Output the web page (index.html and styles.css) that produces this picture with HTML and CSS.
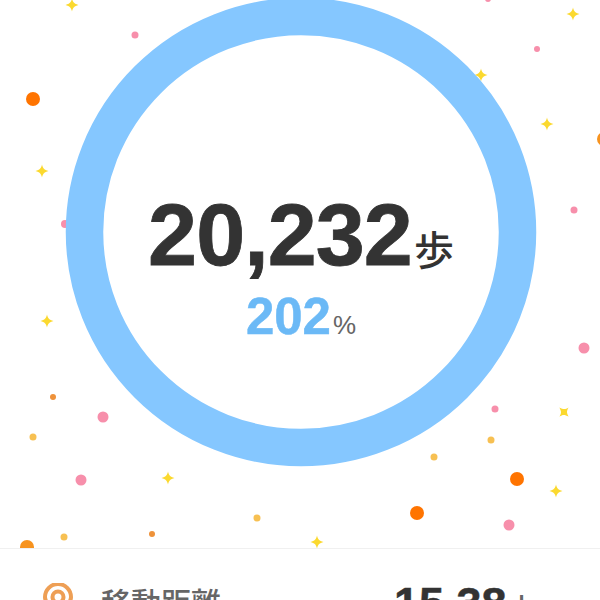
FILE: index.html
```html
<!DOCTYPE html>
<html lang="ja">
<head>
    <meta charset="UTF-8">
    <meta name="viewport" content="width=device-width, initial-scale=1.0">
    <title>歩数</title>
    <link rel="stylesheet" href="styles.css">
</head>
<body>
    <section class="hero">
        <!-- background confetti -->
        <svg class="confetti" width="600" height="548" viewBox="0 0 600 548">
            <defs>
                <path id="star" d="M0-6.5C1-2.4 2.2-1.4 6.5 0 2.2 1.4 1 2.4 0 6.5-1 2.4-2.2 1.4-6.5 0-2.2-1.4-1-2.4 0-6.5Z"/>
            </defs>
            <g class="stars">
                <use href="#star" x="72" y="5"/>
                <use href="#star" x="42" y="171"/>
                <use href="#star" x="47" y="321"/>
                <use href="#star" x="168" y="478"/>
                <use href="#star" x="317" y="542"/>
                <use href="#star" x="481" y="75"/>
                <use href="#star" x="573" y="14"/>
                <use href="#star" x="547" y="124"/>
                <use href="#star" x="556" y="491"/>
                <use href="#star" transform="translate(564 412) rotate(45)"/>
            </g>
            <g class="dots-orange">
                <circle cx="33" cy="99" r="7"/>
                <circle cx="517" cy="479" r="7"/>
                <circle cx="417" cy="513" r="7"/>
            </g>
            <g class="dots-amber">
                <circle cx="27" cy="547" r="7"/>
                <circle cx="604" cy="139" r="7"/>
            </g>
            <g class="dots-pink">
                <circle cx="135" cy="35" r="3.5"/>
                <circle cx="537" cy="49" r="3"/>
                <circle cx="574" cy="210" r="3.5"/>
                <circle cx="584" cy="348" r="5.5"/>
                <circle cx="103" cy="417" r="5.5"/>
                <circle cx="81" cy="480" r="5.5"/>
                <circle cx="509" cy="525" r="5.5"/>
                <circle cx="495" cy="409" r="3.5"/>
                <circle cx="65" cy="224" r="4"/>
                <circle cx="488" cy="-1" r="3"/>
            </g>
            <g class="dots-yellow">
                <circle cx="33" cy="437" r="3.5"/>
                <circle cx="64" cy="537" r="3.5"/>
                <circle cx="257" cy="518" r="3.5"/>
                <circle cx="434" cy="457" r="3.5"/>
                <circle cx="491" cy="440" r="3.5"/>
            </g>
            <g class="dots-brown">
                <circle cx="53" cy="397" r="3"/>
                <circle cx="152" cy="534" r="3"/>
            </g>
            <ellipse class="ring" cx="301" cy="232" rx="216.5" ry="215.5"/>
        </svg>
        <div class="count">
            <div class="steps"><span class="steps-num">20,232</span><span class="steps-unit">歩</span></div>
            <div class="rate"><span class="rate-num">202</span><span class="rate-unit">%</span></div>
        </div>
    </section>
    <section class="row">
        <svg class="row-icon" width="30" height="36" viewBox="0 0 30 36">
            <path d="M15 34C8 26 2 20 2 14a13 13 0 0 1 26 0c0 6-6 12-13 20Z"/>
            <circle cx="15" cy="14" r="5.5"/>
        </svg>
        <div class="row-label">移動距離</div>
        <div class="row-value"><span class="row-num">15.38</span><span class="row-unit">km</span></div>
    </section>
</body>
</html>
```
FILE: styles.css
```css
html, body {
    margin: 0;
    height: 600px;
    overflow: hidden;
    background: #fff;
    font-family: "Liberation Sans", "Noto Sans CJK JP", sans-serif;
}
.hero {
    position: relative;
    height: 548px;
    border-bottom: 1px solid #f0f0f0;
    overflow: hidden;
    display: flex;
    justify-content: center;
}
.confetti {
    position: absolute;
    left: 0;
    top: 0;
}
.stars { fill: #fbd92f; }
.dots-orange { fill: #ff7400; }
.dots-amber { fill: #f7931e; }
.dots-pink { fill: #f78fab; }
.dots-yellow { fill: #f7c052; }
.dots-brown { fill: #ee923a; }
.ring {
    fill: #fff;
    stroke: #85c7ff;
    stroke-width: 37.5;
}
.count {
    position: relative;
    padding-top: 185px;
    margin-left: 2px;
    text-align: center;
}
.steps {
    display: flex;
    align-items: baseline;
    height: 100px;
    color: #333;
}
.steps-num {
    font-size: 88px;
    line-height: 100px;
    font-weight: 700;
    letter-spacing: -0.9px;
    -webkit-text-stroke: 0.8px #333;
}
.steps-unit {
    font-size: 40px;
    font-weight: 500;
    font-family: "Noto Sans CJK JP", sans-serif;
    margin-left: 2px;
}
.rate {
    display: flex;
    align-items: baseline;
    justify-content: center;
    margin-top: 4px;
}
.rate-num {
    font-size: 51px;
    line-height: 56px;
    font-weight: 700;
    color: #6bb9f6;
    -webkit-text-stroke: 0.5px #6bb9f6;
}
.rate-unit {
    font-size: 26px;
    color: #666;
    margin-left: 2px;
}
.row {
    display: flex;
    align-items: flex-start;
    padding: 34px 0 0 43px;
}
.row-icon {
    fill: none;
    stroke: #ee9f55;
    stroke-width: 4;
    flex: none;
}
.row-label {
    margin-left: 28px;
    margin-top: -2px;
    font-size: 30px;
    line-height: 40px;
    font-weight: 500;
    font-family: "Noto Sans CJK JP", sans-serif;
    color: #666;
}
.row-value {
    margin-left: 173px;
    margin-top: -5px;
    display: flex;
    align-items: baseline;
    color: #333;
}
.row-num {
    font-size: 45px;
    line-height: 52px;
    font-weight: 700;
    -webkit-text-stroke: 0.5px #333;
}
.row-unit {
    font-size: 34px;
    color: #666;
    margin-left: 11px;
}
```
